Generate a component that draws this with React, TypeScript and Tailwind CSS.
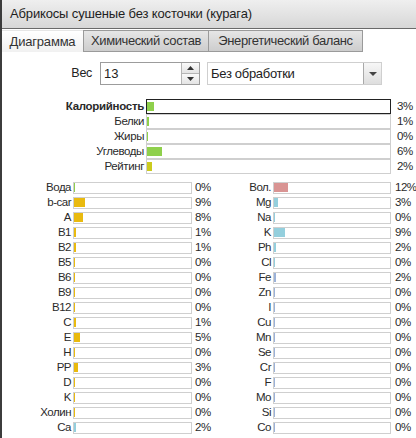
import React from "react";

type Item = { l: string; p: number; c: string };

const GREEN = "#8fd04c";
const YEL = "#e9ba0f";
const ASH = "#d99493";
const MAC = "#94cfdd";
const MIC = "#9bb2d9";

const main: Item[] = [
  { l: "Калорийность", p: 3, c: GREEN },
  { l: "Белки", p: 1, c: GREEN },
  { l: "Жиры", p: 0, c: GREEN },
  { l: "Углеводы", p: 6, c: GREEN },
  { l: "Рейтинг", p: 2, c: "#cbcb1e" },
];

const left: Item[] = [
  { l: "Вода", p: 0, c: GREEN },
  { l: "b-car", p: 9, c: YEL },
  { l: "A", p: 8, c: YEL },
  { l: "B1", p: 1, c: YEL },
  { l: "B2", p: 1, c: YEL },
  { l: "B5", p: 0, c: YEL },
  { l: "B6", p: 0, c: YEL },
  { l: "B9", p: 0, c: YEL },
  { l: "B12", p: 0, c: YEL },
  { l: "C", p: 1, c: YEL },
  { l: "E", p: 5, c: YEL },
  { l: "H", p: 0, c: YEL },
  { l: "PP", p: 3, c: YEL },
  { l: "D", p: 0, c: YEL },
  { l: "K", p: 0, c: YEL },
  { l: "Холин", p: 0, c: YEL },
  { l: "Ca", p: 2, c: MAC },
];

const right: Item[] = [
  { l: "Вол.", p: 12, c: ASH },
  { l: "Mg", p: 3, c: MAC },
  { l: "Na", p: 0, c: MAC },
  { l: "K", p: 9, c: MAC },
  { l: "Ph", p: 2, c: MAC },
  { l: "Cl", p: 0, c: MAC },
  { l: "Fe", p: 2, c: MIC },
  { l: "Zn", p: 0, c: MIC },
  { l: "I", p: 0, c: MIC },
  { l: "Cu", p: 0, c: MIC },
  { l: "Mn", p: 0, c: MIC },
  { l: "Se", p: 0, c: MIC },
  { l: "Cr", p: 0, c: MIC },
  { l: "F", p: 0, c: MIC },
  { l: "Mo", p: 0, c: MIC },
  { l: "Si", p: 0, c: MIC },
  { l: "Co", p: 0, c: MIC },
];

function fillW(p: number, w: number) {
  if (p === 0) return 1;
  return Math.max(2, Math.round((p / 100) * w));
}

function MainRow({ it, first }: { it: Item; first: boolean }) {
  return (
    <div className="flex items-center h-[15px]">
      <div
        className={
          "w-[144px] text-right pr-[2px] text-[11.5px] leading-[15px] text-[#2a2a2a] " +
          (first ? "font-bold tracking-[-0.3px]" : "tracking-[-0.4px]")
        }
      >
        {it.l}
      </div>
      <div
        className={
          "w-[245px] h-[15px] border bg-white flex items-center " +
          (first ? "border-[#222]" : "border-[#cfcfcf]")
        }
      >
        <div className="h-[9px]" style={{ width: fillW(it.p, 243), background: it.c }} />
      </div>
      <div className="pl-[6px] text-[11.5px] tracking-[-0.4px] leading-[15px] text-[#2a2a2a]">{it.p}%</div>
    </div>
  );
}

function SmallRow({ it, lw, bw, pg }: { it: Item; lw: string; bw: string; pg: string }) {
  return (
    <div className="flex items-center h-[15px]">
      <div className={lw + " text-right pr-[2px] text-[11.5px] tracking-[-0.5px] leading-[15px] text-[#2a2a2a]"}>
        {it.l}
      </div>
      <div className={bw + " h-[12px] border border-[#cfcfcf] bg-white flex items-center"}>
        <div className="h-[9px]" style={{ width: fillW(it.p, 117), background: it.c }} />
      </div>
      <div className={pg + " text-[11.5px] tracking-[-0.5px] leading-[15px] text-[#2a2a2a]"}>{it.p}%</div>
    </div>
  );
}

export default function App() {
  return (
    <div
      className="w-[416px] h-[438px] overflow-hidden bg-white border-l-2 border-[#3c3c3c] text-[#222]"
      style={{ fontFamily: '"Liberation Sans", Arial, sans-serif' }}
    >
      {/* header */}
      <div className="h-[29px] flex items-center pl-[8px] bg-gradient-to-b from-[#efefef] to-[#d7d7d7] border-b border-[#6a6a6a] text-[13px] tracking-[-0.15px] text-[#1e1e1e]">
        Абрикосы сушеные без косточки (курага)
      </div>
      {/* tabs */}
      <div className="flex pt-[1px] h-[23px]">
        <div className="w-[81px] h-[22px] flex items-center justify-center text-[13px] tracking-[-0.2px] text-[#333] bg-gradient-to-b from-[#ffffff] to-[#f1f1f1] border-t border-[#e6e6e6]">
          Диаграмма
        </div>
        <div className="w-[126px] h-[22px] flex items-center justify-center text-[13px] tracking-[-0.4px] text-[#333] bg-gradient-to-b from-[#e6e6e6] to-[#cdcdcd] border border-[#9a9a9a]">
          Химический состав
        </div>
        <div className="w-[154px] h-[22px] flex items-center justify-center text-[13px] tracking-[-0.4px] text-[#333] bg-gradient-to-b from-[#e6e6e6] to-[#cdcdcd] border border-l-0 border-[#9a9a9a]">
          Энергетический баланс
        </div>
      </div>
      {/* weight row */}
      <div className="flex items-center mt-[10px] h-[23px]">
        <div className="w-[98px] text-right pr-[8px] text-[12.5px] tracking-[-0.3px] text-[#222]">Вес</div>
        <div className="w-[100px] h-[23px] border border-[#9c9c9c] flex bg-white">
          <div className="flex-1 pl-[3px] text-[13px] leading-[21px] text-[#222]">13</div>
          <div className="w-[18px] flex flex-col border-l border-[#b5b5b5]">
            <div className="flex-1 flex items-center justify-center bg-gradient-to-b from-[#fafafa] to-[#e4e4e4] border-b border-[#b5b5b5]">
              <svg width="7" height="4" viewBox="0 0 7 4"><path d="M0 4 L3.5 0 L7 4 Z" fill="#333" /></svg>
            </div>
            <div className="flex-1 flex items-center justify-center bg-gradient-to-b from-[#fafafa] to-[#e4e4e4]">
              <svg width="7" height="4" viewBox="0 0 7 4"><path d="M0 0 L3.5 4 L7 0 Z" fill="#333" /></svg>
            </div>
          </div>
        </div>
        <div className="ml-[7px] w-[175px] h-[23px] border border-[#cfcfcf] flex bg-white">
          <div className="flex-1 pl-[3px] text-[13px] tracking-[-0.3px] leading-[21px] text-[#222]">Без обработки</div>
          <div className="w-[18px] flex items-center justify-center bg-gradient-to-b from-[#f7f7f7] to-[#dedede] border-l border-[#a9a9a9]">
            <svg width="8" height="4" viewBox="0 0 8 4"><path d="M0 0 L4 4 L8 0 Z" fill="#444" /></svg>
          </div>
        </div>
      </div>
      {/* main bars */}
      <div className="mt-[14px] flex flex-col">
        {main.map((it, i) => (
          <MainRow key={it.l} it={it} first={i === 0} />
        ))}
      </div>
      {/* lower */}
      <div className="mt-[6px] flex">
        <div className="flex flex-col">
          {left.map((it) => (
            <SmallRow key={it.l} it={it} lw="w-[71px]" bw="w-[119px]" pg="w-[38px] pl-[3px]" />
          ))}
        </div>
        <div className="flex flex-col">
          {right.map((it) => (
            <SmallRow key={it.l} it={it} lw="w-[43px]" bw="w-[118px]" pg="pl-[4px]" />
          ))}
        </div>
      </div>
    </div>
  );
}
